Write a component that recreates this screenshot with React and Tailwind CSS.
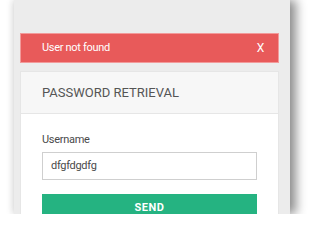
import React from 'react';

export default function App() {
  return (
    <div className="w-[320px] h-[214px] overflow-hidden bg-white" style={{ fontFamily: 'Roboto, "Liberation Sans", sans-serif' }}>
      <div className="ml-[14px] w-[276px] h-[214px] bg-[#ececec] shadow-[6px_0_10px_rgba(0,0,0,0.45),-3px_0_6px_rgba(0,0,0,0.08)] pt-[33px] pl-[6px]">
        <div className="w-[259px] h-[30px] bg-[#e85a5a] border border-[#f29a9a] flex items-center justify-between pl-[21px] pr-[14px] text-white text-[11px] tracking-[-0.3px]">
          <span>User not found</span>
          <span className="text-[12px]">X</span>
        </div>
        <div className="mt-[8px] w-[259px] h-[150px] bg-white border border-[#e6e6e6]">
          <div className="h-[42px] bg-[#f7f7f7] border-b border-[#e6e6e6] flex items-center pl-[21px] text-[13px] text-[#555]">
            PASSWORD RETRIEVAL
          </div>
          <div className="px-[21px] pt-[19px]">
            <div className="text-[11px] text-[#4a4a4a] leading-[14px] tracking-[-0.3px]">Username</div>
            <div className="mt-[5px] h-[28px] border border-[#cfcfcf] flex items-center pl-[8px] text-[11px] text-[#4a4a4a] tracking-[-0.3px]">
              dfgfdgdfg
            </div>
            <div className="mt-[14px] h-[29px] bg-[#25b381] flex items-center justify-center text-white text-[11px] font-bold tracking-[0.5px]">
              SEND
            </div>
          </div>
        </div>
      </div>
    </div>
  );
}
